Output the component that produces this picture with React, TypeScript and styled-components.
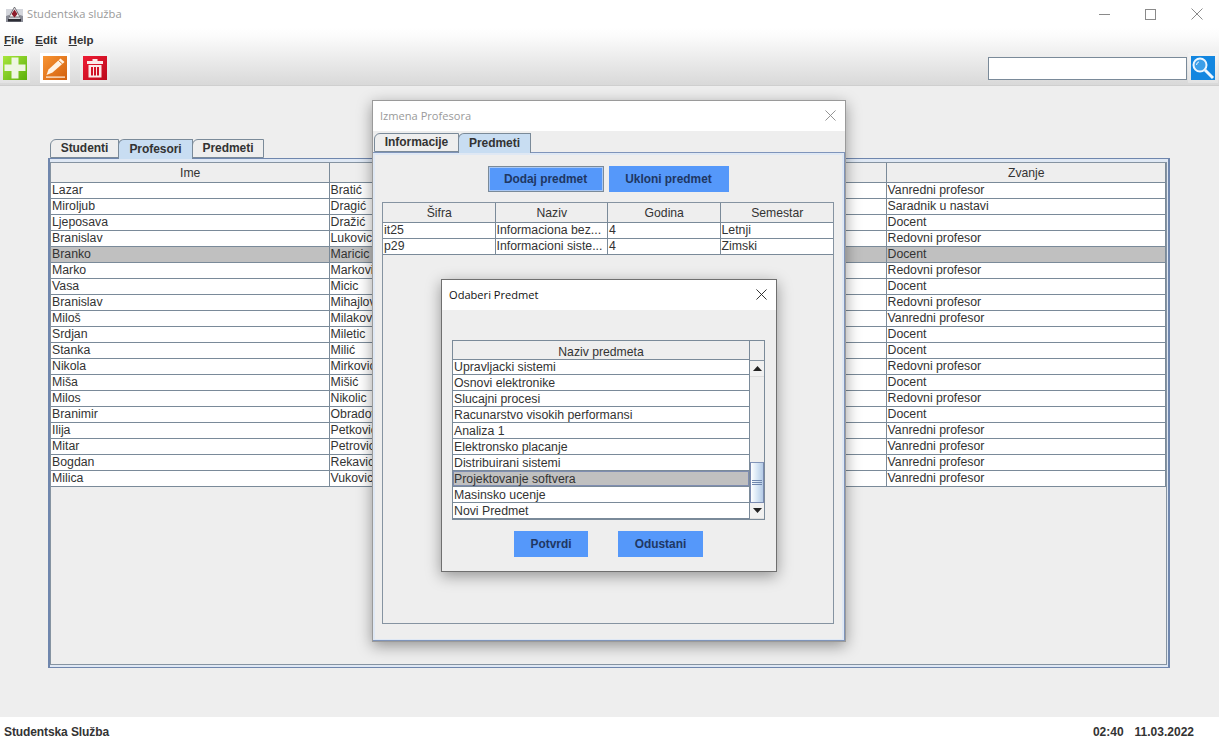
import React from "react";
import styled, { createGlobalStyle } from "styled-components";

const Global = createGlobalStyle`
  html, body { margin: 0; padding: 0; background: #eeeeee; }
  body { font-family: "Liberation Sans", Arial, sans-serif; font-size: 12px; color: #333; overflow: hidden; }
  * { box-sizing: border-box; }
`;

const Page = styled.div`
  position: relative;
  width: 1219px;
  height: 743px;
  display: flex;
  flex-direction: column;
  overflow: hidden;
  background: #eeeeee;
`;
const TitleBar = styled.div`
  height: 28px;
  flex: none;
  background: #fff;
  display: flex;
  align-items: center;
  padding-left: 6px;
  gap: 4px;
`;
const TitleText = styled.span`
  font-family: "Open Sans", "Noto Sans", sans-serif;
  font-size: 11.2px;
  color: #9a9a9a;
  padding-bottom: 1px;
`;
const WinControls = styled.div`
  margin-left: auto;
  display: flex;
  align-items: center;
  padding-right: 16px;
  gap: 35px;
  color: #8a8a8a;
  svg { display: block; }
`;
const Chrome = styled.div`
  flex: none;
  height: 58px;
  background: linear-gradient(180deg, #ffffff 0%, #fbfbfb 15%, #d9d9d9 100%);
  border-bottom: 1px solid #cfcfcf;
`;
const MenuBar = styled.div`
  height: 24px;
  display: flex;
  align-items: center;
  padding: 0 0 0 4px;
  gap: 11.5px;
`;
const MenuItem = styled.span`
  font-weight: 700;
  font-size: 11.5px;
  color: #333;
  &::first-letter { text-decoration: underline; }
`;
const Toolbar = styled.div`
  height: 32px;
  display: flex;
  align-items: center;
  padding-left: 0;
`;
const ToolButton = styled.div<{ $active?: boolean }>`
  width: 30px;
  height: 30px;
  margin-right: 10px;
  display: flex;
  align-items: center;
  justify-content: center;
  background: ${(p) => (p.$active ? "#ffffff" : "rgba(255,255,255,0.25)")};
  svg { display: block; }
`;
const SearchGroup = styled.div`
  margin-left: auto;
  display: flex;
  align-items: center;
  gap: 1px;
  padding-right: 1px;
`;
const SearchInput = styled.div`
  width: 199px;
  height: 23px;
  background: #fff;
  border: 1px solid #7a8a99;
`;
const SearchBtn = styled(ToolButton)`
  margin-right: 0;
`;
const Content = styled.div`
  flex: 1;
  padding: 53px 49px 49px 48px;
  display: flex;
  flex-direction: column;
`;
const TabRow = styled.div<{ $left: number; $top?: number; $h?: number }>`
  display: flex;
  height: ${(p) => p.$h ?? 19}px;
  margin-top: ${(p) => p.$top ?? 0}px;
  flex: none;
  padding-left: ${(p) => p.$left}px;
`;
const Tab = styled.div<{ $active?: boolean; $w: number }>`
  width: ${(p) => p.$w}px;
  height: ${(p) => (p.$active ? 20 : 19)}px;
  display: flex;
  align-items: center;
  justify-content: center;
  padding-bottom: ${(p) => (p.$active ? 2 : 1)}px;
  font-weight: 700;
  letter-spacing: -0.05px;
  color: #333;
  border: 1px solid #7a8a99;
  border-bottom: ${(p) => (p.$active ? "none" : "1px solid #7a8a99")};
  border-top-left-radius: 6px;
  margin-left: -1px;
  background: ${(p) => (p.$active ? "#c8ddf2" : "#eeeeee")};
  position: relative;
  z-index: ${(p) => (p.$active ? 1 : 0)};
`;
const TabPanel = styled.div`
  flex: 1;
  display: flex;
  border: 1px solid #6f86ad;
  border-left-width: 2px;
  border-right-width: 2px;
  background: #dfe8f4;
  padding: 3px 1px 2px 0;
`;
const PanelBody = styled.div`
  flex: 1;
  border: 1px solid #8593a1;
  background: #eeeeee;
  min-width: 0;
`;
const Grid = styled.div<{ $cols: number }>`
  display: grid;
  grid-template-columns: repeat(${(p) => p.$cols}, 1fr);
  min-width: 0;
`;
const HeadCell = styled.div`
  height: 20px;
  display: flex;
  align-items: center;
  justify-content: center;
  font-size: 12.2px;
  padding-left: 1px;
  background: #eeeeee;
  color: #333;
  border-right: 1px solid #7a8a99;
  border-bottom: 1px solid #7a8a99;
  &:last-child { border-right: none; }
`;
const BodyRow = styled(Grid)<{ $selected?: boolean }>`
  height: 16px;
  background: ${(p) => (p.$selected ? "#c0c0c0" : "#ffffff")};
`;
const Cell = styled.div`
  height: 16px;
  line-height: 15px;
  font-size: 12.3px;
  padding-left: 1px;
  white-space: nowrap;
  overflow: hidden;
  color: #333;
  border-right: 1px solid #7a8a99;
  border-bottom: 1px solid #7a8a99;
  &:last-child { border-right: none; }
`;
const TableWrap = styled.div`
  border-right: 1px solid #7a8a99;
`;
const StatusBar = styled.div`
  height: 26px;
  flex: none;
  background: #fff;
  display: flex;
  align-items: center;
  justify-content: space-between;
  padding: 3px 25px 0 4px;
  font-weight: 700;
  color: #333;
`;
const StatusLeft = styled.span`
  letter-spacing: -0.1px;
`;
const StatusRight = styled.div`
  display: flex;
  gap: 11px;
`;

/* floating windows */
const Dialog = styled.div<{ $x: number; $y: number; $w: number; $h: number; $edge: string }>`
  position: absolute;
  left: ${(p) => p.$x}px;
  top: ${(p) => p.$y}px;
  width: ${(p) => p.$w}px;
  height: ${(p) => p.$h}px;
  display: flex;
  flex-direction: column;
  background: #eeeeee;
  border: 1px solid ${(p) => p.$edge};
  box-shadow: 0 4px 14px rgba(0, 0, 0, 0.38);
`;
const DialogTitle = styled.div<{ $dark?: boolean }>`
  height: 30px;
  flex: none;
  background: #fff;
  display: flex;
  align-items: center;
  justify-content: space-between;
  padding: 0 9px 2px 7px;
  font-family: "Open Sans", "Noto Sans", sans-serif;
  font-size: 11.1px;
  color: ${(p) => (p.$dark ? "#111" : "#9a9a9a")};
  svg { display: block; }
`;
const InnerPanel = styled.div`
  flex: 1;
  display: flex;
  flex-direction: column;
  margin-top: -1px;
  border: 1px solid #7f94ba;
  border-width: 1px 1px 1px 0;
  background: #dfe8f4;
  padding: 2px 2px 1px 2px;
`;
const InnerBody = styled.div`
  flex: 1;
  display: flex;
  flex-direction: column;
  background: #eeeeee;
  padding: 11px 8px 15px 7px;
  min-height: 0;
`;
const ButtonRow = styled.div<{ $gap: number; $top?: number; $shift?: number }>`
  display: flex;
  justify-content: center;
  gap: ${(p) => p.$gap}px;
  margin-top: ${(p) => p.$top ?? 0}px;
  padding-right: ${(p) => p.$shift ?? 0}px;
`;
const ActionButton = styled.div<{ $w: number; $focus?: boolean }>`
  width: ${(p) => p.$w}px;
  height: 26px;
  display: flex;
  align-items: center;
  justify-content: center;
  font-size: 11.9px;
  background: #5598fa;
  color: #1f3763;
  font-weight: 700;
  border: ${(p) => (p.$focus ? "1px solid #7a8a99" : "none")};
  box-shadow: ${(p) => (p.$focus ? "inset 0 0 0 1px #a9c8f5" : "none")};
`;
const SubjectBox = styled.div`
  flex: 1;
  margin-top: 10px;
  border: 1px solid #8593a1;
  min-height: 0;
`;
const Selector = styled.div`
  flex: 1;
  padding: 30px 11px 0 10px;
  display: flex;
  flex-direction: column;
`;
const ListFrame = styled.div`
  display: flex;
  height: 180px;
  border: 1px solid #7a8a99;
`;
const ListColumn = styled.div`
  width: 297px;
  flex: none;
  display: flex;
  flex-direction: column;
  overflow: hidden;
  position: relative;
  border-right: 1px solid #7a8a99;
`;
const ListHead = styled.div`
  height: 19px;
  flex: none;
  display: flex;
  align-items: center;
  justify-content: center;
  font-size: 12.2px;
  background: #eeeeee;
  color: #333;
  padding-top: 3px;
  position: relative;
  z-index: 1;
  border-bottom: 1px solid #7a8a99;
`;
const ListRows = styled.div`
  margin-top: -1px;
`;
const ListRow = styled.div<{ $selected?: boolean }>`
  height: 16px;
  line-height: 15px;
  padding: 1px 0 0 1px;
  font-size: 12.3px;
  color: #333;
  background: ${(p) => (p.$selected ? "#c0c0c0" : "#ffffff")};
  border-bottom: 1px solid #7a8a99;
  box-shadow: ${(p) => (p.$selected ? "inset 0 0 0 1px #7f8db0" : "none")};
`;
const ScrollColumn = styled.div`
  flex: 1;
  display: flex;
  flex-direction: column;
  background: #eeeeee;
`;
const ScrollCorner = styled.div`
  height: 20px;
  flex: none;
  border-bottom: 1px solid #8593a1;
`;
const ScrollArrow = styled.div`
  height: 16px;
  flex: none;
  display: flex;
  align-items: center;
  justify-content: center;
  background: #f1f1f1;
  border-bottom: 1px solid #ddd;
  svg { display: block; }
`;
const ScrollTrack = styled.div`
  flex: 1;
  display: flex;
  flex-direction: column;
  justify-content: flex-end;
`;
const ScrollThumb = styled.div`
  height: 41px;
  display: flex;
  align-items: center;
  justify-content: center;
  border: 1px solid #7a8ab0;
  border-top-color: #8294b8;
  background: linear-gradient(90deg, #ffffff 0%, #d8e6f5 50%, #b4cbe6 100%);
  svg { display: block; }
`;

const mainRows: [string, string, string][] = [
  ["Lazar", "Bratić", "Vanredni profesor"],
  ["Miroljub", "Dragić", "Saradnik u nastavi"],
  ["Ljeposava", "Dražić", "Docent"],
  ["Branislav", "Lukovic", "Redovni profesor"],
  ["Branko", "Maricic", "Docent"],
  ["Marko", "Markovic", "Redovni profesor"],
  ["Vasa", "Micic", "Docent"],
  ["Branislav", "Mihajlovic", "Redovni profesor"],
  ["Miloš", "Milakovic", "Vanredni profesor"],
  ["Srdjan", "Miletic", "Docent"],
  ["Stanka", "Milić", "Docent"],
  ["Nikola", "Mirkovic", "Redovni profesor"],
  ["Miša", "Mišić", "Docent"],
  ["Milos", "Nikolic", "Redovni profesor"],
  ["Branimir", "Obradovic", "Docent"],
  ["Ilija", "Petkovic", "Vanredni profesor"],
  ["Mitar", "Petrovic", "Vanredni profesor"],
  ["Bogdan", "Rekavic", "Vanredni profesor"],
  ["Milica", "Vukovic", "Vanredni profesor"],
];
const subjectRows = [
  ["it25", "Informaciona bez...", "4", "Letnji"],
  ["p29", "Informacioni siste...", "4", "Zimski"],
];
const listRows = [
  "Upravljacki sistemi",
  "Osnovi elektronike",
  "Slucajni procesi",
  "Racunarstvo visokih performansi",
  "Analiza 1",
  "Elektronsko placanje",
  "Distribuirani sistemi",
  "Projektovanje softvera",
  "Masinsko ucenje",
  "Novi Predmet",
];

const AppIcon = () => (
  <svg width="17" height="17" viewBox="0 0 17 17">
    <rect x="0" y="3" width="17" height="13" fill="#d4d6dc" />
    <path d="M3 11 L8.5 1 L14 11 Z" fill="#f2f2f4" stroke="#55555c" strokeWidth="0.8" />
    <path d="M8.5 3.5 L11.5 8 L8.5 11.5 L5.5 8 Z" fill="#8c1c2c" />
    <path d="M0 10 L3 9 V13 H14 V9 L17 10 V16 H0 Z" fill="#8a8c96" />
    <rect x="2" y="13" width="13" height="2.5" fill="#2c2c34" />
  </svg>
);
const CloseIcon = ({ size, color }: { size: number; color: string }) => (
  <svg width={size} height={size} viewBox="0 0 12 12">
    <path d="M0.5 0.5 L11.5 11.5 M11.5 0.5 L0.5 11.5" stroke={color} strokeWidth="1" fill="none" />
  </svg>
);
const PlusIcon = () => (
  <svg width="24" height="24" viewBox="0 0 24 24">
    <defs>
      <linearGradient id="gr" x1="0" y1="0" x2="1" y2="1">
        <stop offset="0" stopColor="#a8e63c" />
        <stop offset="1" stopColor="#5cb00c" />
      </linearGradient>
    </defs>
    <rect width="24" height="24" fill="url(#gr)" />
    <path d="M8.5 1.5 H15.5 V8.5 H22.5 V15 H15.5 V22.5 H8.5 V15 H1.5 V8.5 H8.5 Z" fill="#eef6e2" />
  </svg>
);
const EditIcon = () => (
  <svg width="24" height="24" viewBox="0 0 24 24">
    <defs>
      <linearGradient id="or" x1="0" y1="0" x2="1" y2="1">
        <stop offset="0" stopColor="#f89432" />
        <stop offset="1" stopColor="#d2600e" />
      </linearGradient>
    </defs>
    <rect width="24" height="24" fill="url(#or)" />
    <path d="M17.5 2.5 L21.5 6 L9.5 16.5 L3.5 19 L5.5 13.5 Z" fill="#fff3e4" />
    <path d="M15.5 4.5 L19.5 8" stroke="#e07a20" strokeWidth="1" fill="none" />
    <rect x="3" y="20.5" width="19" height="1.2" fill="#fff3e4" />
  </svg>
);
const TrashIcon = () => (
  <svg width="24" height="24" viewBox="0 0 24 24">
    <defs>
      <linearGradient id="rd" x1="0" y1="0" x2="1" y2="1">
        <stop offset="0" stopColor="#ee1c34" />
        <stop offset="1" stopColor="#bc0a1c" />
      </linearGradient>
    </defs>
    <rect width="24" height="24" fill="url(#rd)" />
    <path d="M9.5 3 H14.5 V5 H20 V8 H4 V5 H9.5 Z" fill="#fbeaea" />
    <path
      d="M5.5 9 H18.5 V21.5 H5.5 Z M8 11 V19.5 H10 V11 Z M11 11 V19.5 H13 V11 Z M14 11 V19.5 H16 V11 Z"
      fill="#fbeaea"
      fillRule="evenodd"
    />
  </svg>
);
const SearchIcon = () => (
  <svg width="24" height="24" viewBox="0 0 24 24">
    <rect width="24" height="24" fill="#1286e0" />
    <circle cx="9" cy="9" r="6.5" fill="#3d9fe8" stroke="#eef7ff" strokeWidth="2" />
    <path d="M5.5 9 A3.5 3.5 0 0 1 8 5.8" stroke="#eef7ff" strokeWidth="1" fill="none" />
    <path d="M14 14 L22 22" stroke="#eef7ff" strokeWidth="3" />
  </svg>
);
const Arrow = ({ up }: { up?: boolean }) => (
  <svg width="9" height="5" viewBox="0 0 9 5">
    <path d={up ? "M4.5 0 L9 5 H0 Z" : "M0 0 H9 L4.5 5 Z"} fill="#222" />
  </svg>
);
const Grip = () => (
  <svg width="10" height="6" viewBox="0 0 10 6">
    <path d="M0 0.5 H10 M0 2.5 H10 M0 4.5 H10" stroke="#6f86ad" strokeWidth="1" />
  </svg>
);

export default function App() {
  return (
    <Page>
      <Global />
      <TitleBar>
        <AppIcon />
        <TitleText>Studentska služba</TitleText>
        <WinControls>
          <svg width="11" height="11" viewBox="0 0 11 11"><path d="M0 5.5 H11" stroke="#8a8a8a" /></svg>
          <svg width="11" height="11" viewBox="0 0 11 11"><rect x="0.5" y="0.5" width="10" height="10" fill="none" stroke="#8a8a8a" /></svg>
          <CloseIcon size={12} color="#8a8a8a" />
        </WinControls>
      </TitleBar>
      <Chrome>
        <MenuBar>
          <MenuItem>File</MenuItem>
          <MenuItem>Edit</MenuItem>
          <MenuItem>Help</MenuItem>
        </MenuBar>
        <Toolbar>
          <ToolButton><PlusIcon /></ToolButton>
          <ToolButton $active><EditIcon /></ToolButton>
          <ToolButton><TrashIcon /></ToolButton>
          <SearchGroup>
            <SearchInput />
            <SearchBtn><SearchIcon /></SearchBtn>
          </SearchGroup>
        </Toolbar>
      </Chrome>
      <Content>
        <TabRow $left={3}>
          <Tab $w={69}>Studenti</Tab>
          <Tab $w={75} $active>Profesori</Tab>
          <Tab $w={72}>Predmeti</Tab>
        </TabRow>
        <TabPanel>
          <PanelBody>
            <TableWrap>
              <Grid $cols={4}>
                <HeadCell>Ime</HeadCell>
                <HeadCell />
                <HeadCell />
                <HeadCell>Zvanje</HeadCell>
              </Grid>
              {mainRows.map((r, i) => (
                <BodyRow key={i} $cols={4} $selected={i === 4}>
                  <Cell>{r[0]}</Cell>
                  <Cell>{r[1]}</Cell>
                  <Cell />
                  <Cell>{r[2]}</Cell>
                </BodyRow>
              ))}
            </TableWrap>
          </PanelBody>
        </TabPanel>
      </Content>
      <StatusBar>
        <StatusLeft>Studentska Služba</StatusLeft>
        <StatusRight>
          <span>02:40</span>
          <span>11.03.2022</span>
        </StatusRight>
      </StatusBar>

      <Dialog $x={372} $y={100} $w={474} $h={542} $edge="#9a9a9a">
        <DialogTitle>
          Izmena Profesora
          <CloseIcon size={11} color="#8a8a8a" />
        </DialogTitle>
        <TabRow $left={2} $top={2} $h={20}>
          <Tab $w={85}>Informacije</Tab>
          <Tab $w={73} $active>Predmeti</Tab>
        </TabRow>
        <InnerPanel>
          <InnerBody>
            <ButtonRow $gap={5}>
              <ActionButton $w={116} $focus>Dodaj predmet</ActionButton>
              <ActionButton $w={120}>Ukloni predmet</ActionButton>
            </ButtonRow>
            <SubjectBox>
              <Grid $cols={4}>
                <HeadCell>Šifra</HeadCell>
                <HeadCell>Naziv</HeadCell>
                <HeadCell>Godina</HeadCell>
                <HeadCell>Semestar</HeadCell>
              </Grid>
              {subjectRows.map((r, i) => (
                <BodyRow key={i} $cols={4}>
                  {r.map((c, j) => (
                    <Cell key={j}>{c}</Cell>
                  ))}
                </BodyRow>
              ))}
            </SubjectBox>
          </InnerBody>
        </InnerPanel>
      </Dialog>

      <Dialog $x={441} $y={279} $w={336} $h={293} $edge="#6f6f6f">
        <DialogTitle $dark>
          Odaberi Predmet
          <CloseIcon size={11} color="#222" />
        </DialogTitle>
        <Selector>
          <ListFrame>
            <ListColumn>
              <ListHead>Naziv predmeta</ListHead>
              <ListRows>
                {listRows.map((r, i) => (
                  <ListRow key={r} $selected={i === 7}>{r}</ListRow>
                ))}
              </ListRows>
            </ListColumn>
            <ScrollColumn>
              <ScrollCorner />
              <ScrollArrow><Arrow up /></ScrollArrow>
              <ScrollTrack>
                <ScrollThumb><Grip /></ScrollThumb>
              </ScrollTrack>
              <ScrollArrow><Arrow /></ScrollArrow>
            </ScrollColumn>
          </ListFrame>
          <ButtonRow $gap={30} $top={11}>
            <ActionButton $w={74}>Potvrdi</ActionButton>
            <ActionButton $w={85}>Odustani</ActionButton>
          </ButtonRow>
        </Selector>
      </Dialog>
    </Page>
  );
}
